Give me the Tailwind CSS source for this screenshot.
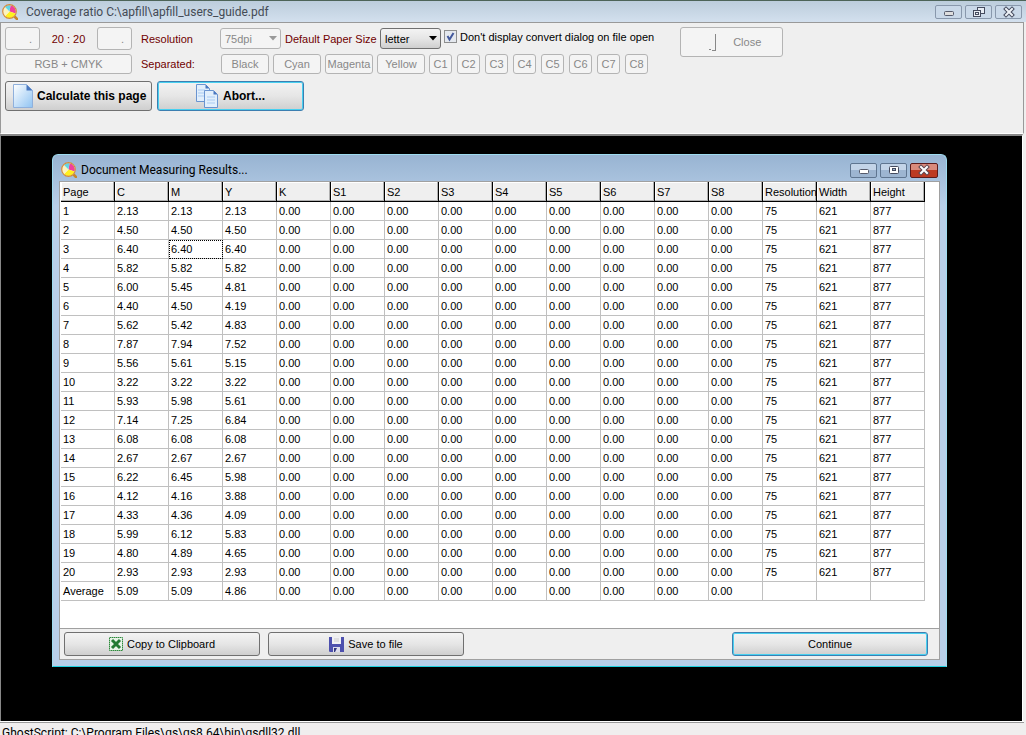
<!DOCTYPE html>
<html lang="en">
<head>
    <meta charset="UTF-8">
    <meta name="viewport" content="width=device-width, initial-scale=1.0">
    <title>Coverage ratio</title>

    <!-- Tailwind CSS -->
    <script src="https://cdn.jsdelivr.net/npm/@tailwindcss/browser@4"></script>
</head>
<body class="h-screen flex flex-col overflow-hidden bg-[#f0eeee] font-['Liberation_Sans',sans-serif] text-[11px] leading-[14px] text-black">

    <!-- Shared logo -->
    <svg class="hidden">
        <symbol id="logo" viewBox="0 0 16 16">
            <path d="M12 12l3 3" stroke="#c8862a" stroke-width="2.5" stroke-linecap="round" />
            <circle cx="7.5" cy="7.5" r="7" fill="#fff" />
            <path d="M7.5 7.5L8.500 1.200A6.300 6.300 0 0 1 13.500 9.500z" fill="#f0409c" />
            <path d="M7.5 7.5L13.500 9.500A6.300 6.300 0 0 1 3 12z" fill="#fff01f" />
            <path d="M7.5 7.5L3 12A6.300 6.300 0 0 1 3 3z" fill="#fbf3c0" />
            <path d="M7.500 7.500L3 3A6.300 6.300 0 0 1 8.500 1.200z" fill="#62d6e4" />
            <circle cx="7.5" cy="7.5" r="6.800" fill="none" stroke="#d08a3c" stroke-width="1.200" />
        </symbol>
    </svg>

    <!-- Title bar -->
    <header class="h-[22px] shrink-0 flex items-center border-t border-[#4d6458] bg-linear-to-b from-[#bccddc] to-[#d3e0ee] pl-[2px] pr-[4px]">
        <svg class="size-4"><use href="#logo" /></svg>
        <h1 class="ml-2 flex-1 font-[Roboto,sans-serif] text-[12px] text-[#444b55]">Coverage ratio C:\apfill\apfill_users_guide.pdf</h1>
        <div class="flex gap-[3px]">
            <button aria-label="Minimize" class="w-[27px] h-[14px] grid place-items-center rounded-xs border border-[#8998ac] bg-[#c9d8e8]">
                <svg class="w-[12px] h-[12px]" viewBox="0 0 12 12"><rect x="1.500" y="5.500" width="9" height="4" rx="1" fill="#ddd" stroke="#555a6b" /></svg>
            </button>
            <button aria-label="Restore" class="w-[27px] h-[14px] grid place-items-center rounded-xs border border-[#8998ac] bg-[#c9d8e8]">
                <svg class="w-[12px] h-[12px]" viewBox="0 0 12 12" fill="#e8edf4" stroke="#454b5e"><rect x="4.500" y="1.500" width="7" height="6" /><rect x=".5" y="4.500" width="7" height="6" /><rect x="2.500" y="6.500" width="3" height="2" /></svg>
            </button>
            <button aria-label="Close window" class="w-[27px] h-[14px] grid place-items-center rounded-xs border border-[#8998ac] bg-[#c9d8e8]">
                <svg class="w-[12px] h-[12px]" viewBox="0 0 12 12"><path d="M3 3l6 6M9 3l-6 6" stroke="#454b5e" stroke-width="4" stroke-linecap="square" /><path d="M3 3l6 6M9 3l-6 6" stroke="#eef2f7" stroke-width="2" stroke-linecap="square" /></svg>
            </button>
        </div>
    </header>

    <!-- Toolbar -->
    <section class="h-[112px] shrink-0 mr-[2px] flex items-start gap-[26px] border border-[#999] border-b-white bg-[#efefef] pt-1 pl-1">
        <div class="flex flex-col">
            <div class="flex items-center h-[23px]">
                <div class="w-[127px] flex items-center justify-between text-[#700000]">
                    <button disabled aria-label="Previous page" class="w-[35px] h-[23px] rounded-[3px] border border-[#b4b4b4] bg-[#f4f4f4] pl-4 text-[#888]">.</button>
                    <span>20 : 20</span>
                    <button disabled aria-label="Next page" class="w-[35px] h-[23px] rounded-[3px] border border-[#b4b4b4] bg-[#f4f4f4] pl-4 text-[#888]">.</button>
                </div>
                <label for="resolution" class="w-[79px] ml-[9px] text-[#700000]">Resolution</label>
                <div class="relative">
                    <select id="resolution" disabled class="block w-[61px] h-[21px] appearance-none rounded-[3px] border border-[#b4b4b4] bg-[#f4f4f4] pl-1 text-[#888] opacity-100"><option>75dpi</option></select>
                    <svg class="absolute right-1 top-2 w-[8px] h-[5px] pointer-events-none" viewBox="0 0 8 5"><path d="M0 0h8L4 4.500z" fill="#999" /></svg>
                </div>
                <label for="paper" class="w-[95px] ml-1 text-[#700000] whitespace-nowrap">Default Paper Size</label>
                <div class="relative">
                    <select id="paper" class="block w-[61px] h-[21px] appearance-none rounded-[3px] border border-[#707070] bg-linear-to-b from-[#f3f3f3] via-[#e6e6e6] to-[#cfcfcf] pl-1"><option>letter</option></select>
                    <svg class="absolute right-1 top-2 w-[8px] h-[5px] pointer-events-none" viewBox="0 0 8 5"><path d="M0 0h8L4 4.500z" fill="#000" /></svg>
                </div>
                <label class="flex items-center gap-[3px] ml-[3px] mb-1 whitespace-nowrap">
                    <span class="relative size-[13px]">
                        <input type="checkbox" checked class="block size-[13px] appearance-none border border-[#8e8f8f] bg-[#e4e8ee]">
                        <svg class="absolute inset-0 size-[13px] pointer-events-none" viewBox="0 0 13 13"><path d="M3.500 6l2 3.500L9.500 3" fill="none" stroke="#42589c" stroke-width="2" /></svg>
                    </span>
                    Don't display convert dialog on file open
                </label>
            </div>
            <div class="flex items-center mt-1 h-[20px] text-[#888]">
                <button disabled class="w-[127px] h-[20px] rounded-[3px] border border-[#b4b4b4] bg-[#f4f4f4]">RGB + CMYK</button>
                <span class="w-[79px] ml-[9px] text-[#700000]">Separated:</span>
                <div class="flex gap-1 ml-px">
                    <button disabled class="w-[48px] h-[20px] rounded-[3px] border border-[#b4b4b4] bg-[#f4f4f4]">Black</button>
                    <button disabled class="w-[48px] h-[20px] rounded-[3px] border border-[#b4b4b4] bg-[#f4f4f4]">Cyan</button>
                    <button disabled class="w-[48px] h-[20px] rounded-[3px] border border-[#b4b4b4] bg-[#f4f4f4]">Magenta</button>
                    <button disabled class="w-[48px] h-[20px] rounded-[3px] border border-[#b4b4b4] bg-[#f4f4f4]">Yellow</button>
                    <div id="channels" class="flex gap-[5px]"></div>
                </div>
            </div>
            <div class="flex gap-[5px] mt-[7px] font-bold text-[12px]">
                <button class="w-[147px] h-[30px] flex items-center gap-1 rounded-[3px] border border-[#707070] bg-linear-to-b from-[#f3f3f3] via-[#e6e6e6] to-[#cfcfcf] pl-[7px] whitespace-nowrap">
                    <svg class="w-[20px] h-[24px] shrink-0" viewBox="0 0 20 24"><defs><linearGradient id="sheet" x2="1" y2="1"><stop stop-color="#fff" /><stop offset="1" stop-color="#8fc3f2" /></linearGradient></defs><path d="M.5.5h13l6 6v17H.5z" fill="url(#sheet)" stroke="#8fb0dc" /><path d="M13.500.5v6h6z" fill="#4a78c0" /></svg>
                    Calculate this page
                </button>
                <button class="w-[147px] h-[30px] flex items-center justify-center gap-1 rounded-[3px] border border-[#3c7fb1] bg-linear-to-b from-[#f3f3f3] via-[#e6e6e6] to-[#cfcfcf] inset-ring inset-ring-[#48d0f0]">
                    <svg class="w-[23px] h-[24px]" viewBox="0 0 23 24"><path d="M.5.5h9l4 4v13H.5z" fill="#e2effc" stroke="#6a94d0" /><path d="M9.500.5v4h4z" fill="#4a78c0" /><path d="M2 6h7M2 9h7M2 12h7" stroke="#a9cbf2" /><path d="M8.500 6.500h9l4 4v13h-13z" fill="#e2effc" stroke="#6a94d0" /><path d="M17.500 6.500v4h4z" fill="#4a78c0" /><path d="M11 13h8M11 16h8M11 19h8" stroke="#a9cbf2" /></svg>
                    Abort...
                </button>
            </div>
        </div>
        <button disabled class="w-[103px] h-[30px] flex items-center gap-4 rounded-[3px] border border-[#b4b4b4] bg-[#f4f4f4] pl-[26px] text-[#888]">
            <svg class="w-[10px] h-[20px]" viewBox="0 0 10 20" stroke="#888" fill="none"><path d="M8.500 2v17M2 17.500h2M5 18.500h3" /></svg>
            Close
        </button>
    </section>

    <!-- Workspace -->
    <main class="relative flex-1 mr-[3px] border-t-2 border-l border-r border-[#888] border-r-white bg-black">
        <section class="absolute left-[51px] top-[18px] w-[895px] h-[513px] flex flex-col rounded-t-md border border-[#9fdcf0] border-b-[#1fd0e0] bg-linear-to-b from-[#98b4d2] to-[#b9cfe9] to-10% px-[6px] pb-[6px]">
            <div class="h-[26px] shrink-0 flex items-center pt-1 pl-[2px] pr-[2px]">
                <svg class="size-4"><use href="#logo" /></svg>
                <h2 class="ml-1 flex-1 font-[Roboto,sans-serif] text-[12px]">Document Measuring Results...</h2>
                <div class="flex gap-[3px]">
                    <button aria-label="Minimize dialog" class="w-[27px] h-[15px] grid place-items-center rounded-xs border border-[#5f7590] bg-linear-to-b from-[#c3d4e8] from-50% to-[#9db5d1] to-50%">
                        <svg class="w-[12px] h-[12px]" viewBox="0 0 12 12"><rect x="1.500" y="5.500" width="9" height="4" rx="1" fill="#fff" stroke="#555a6b" /></svg>
                    </button>
                    <button aria-label="Maximize dialog" class="w-[27px] h-[15px] grid place-items-center rounded-xs border border-[#5f7590] bg-linear-to-b from-[#c3d4e8] from-50% to-[#9db5d1] to-50%">
                        <svg class="w-[12px] h-[12px]" viewBox="0 0 12 12" stroke="#454b5e"><rect x="1.500" y="2.500" width="9" height="7" rx="1" fill="#fff" /><rect x="4.500" y="4.500" width="3" height="2" fill="#9db5d1" /></svg>
                    </button>
                    <button aria-label="Close dialog" class="w-[28px] h-[15px] grid place-items-center rounded-xs border border-[#5c1a1a] bg-linear-to-b from-[#d98a7c] from-50% to-[#bd3a22] to-50%">
                        <svg class="w-[12px] h-[12px]" viewBox="0 0 12 12"><path d="M3 3l6 6M9 3l-6 6" stroke="#5b4650" stroke-width="4" stroke-linecap="square" /><path d="M3 3l6 6M9 3l-6 6" stroke="#fff" stroke-width="2" stroke-linecap="square" /></svg>
                    </button>
                </div>
            </div>
            <div class="flex-1 flex flex-col border border-[#a0a0a0] bg-white">
                <div class="flex-1 pl-px">
                    <table class="table-fixed w-[864px] border-separate border-spacing-0 text-left">
                        <thead><tr id="head"></tr></thead>
                        <tbody id="rows"></tbody>
                    </table>
                </div>
                <div class="h-[31px] flex items-center gap-2 border-t border-[#a0a0a0] bg-[#efefef] pl-1 pr-[11px]">
                    <button class="w-[196px] h-[24px] flex items-center justify-center gap-1 rounded-[3px] border border-[#707070] bg-linear-to-b from-[#f3f3f3] via-[#e6e6e6] to-[#cfcfcf]">
                        <svg class="size-[14px]" viewBox="0 0 14 14"><rect x=".5" y=".5" width="13" height="13" fill="#e8f4e8" stroke="#2e8b3c" stroke-dasharray="1.500 .5" /><path d="M3 3l8 8M11 3l-8 8" stroke="#237a33" stroke-width="3" /></svg>
                        Copy to Clipboard
                    </button>
                    <button class="w-[196px] h-[24px] flex items-center justify-center gap-1 rounded-[3px] border border-[#707070] bg-linear-to-b from-[#f3f3f3] via-[#e6e6e6] to-[#cfcfcf]">
                        <svg class="size-[15px]" viewBox="0 0 15 15"><path d="M0 0h15v15.500H1L0 14z" fill="#4d50ae" /><path d="M3 0h9v7H3z" fill="#f0f0f4" /><path d="M5 2h5M5 4h5" stroke="#ccc" /><path d="M4 10h7v5H4z" fill="#dcdcec" /><path d="M5 11h3l-2 4H5z" fill="#333780" /></svg>
                        Save to file
                    </button>
                    <button class="w-[196px] h-[24px] ml-auto rounded-[3px] border border-[#3c7fb1] bg-linear-to-b from-[#f3f3f3] via-[#e6e6e6] to-[#cfcfcf] inset-ring inset-ring-[#48d0f0]">Continue</button>
                </div>
            </div>
        </section>
    </main>

    <!-- Status bar -->
    <footer class="h-[14px] shrink-0 overflow-hidden border-t border-white mr-[2px]">
        <div class="border-t border-[#999] pt-[2px] pl-[2px] font-[Roboto,sans-serif] text-[12px] leading-[16px]">GhostScript: C:\Program Files\gs\gs8.64\bin\gsdll32.dll</div>
    </footer>

    <script>
    const columns = ["Page", "C", "M", "Y", "K", "S1", "S2", "S3", "S4", "S5", "S6", "S7", "S8", "Resolution", "Width", "Height"];
    const pages = [
        ["1", "2.13", "2.13", "2.13"],
        ["2", "4.50", "4.50", "4.50"],
        ["3", "6.40", "6.40", "6.40"],
        ["4", "5.82", "5.82", "5.82"],
        ["5", "6.00", "5.45", "4.81"],
        ["6", "4.40", "4.50", "4.19"],
        ["7", "5.62", "5.42", "4.83"],
        ["8", "7.87", "7.94", "7.52"],
        ["9", "5.56", "5.61", "5.15"],
        ["10", "3.22", "3.22", "3.22"],
        ["11", "5.93", "5.98", "5.61"],
        ["12", "7.14", "7.25", "6.84"],
        ["13", "6.08", "6.08", "6.08"],
        ["14", "2.67", "2.67", "2.67"],
        ["15", "6.22", "6.45", "5.98"],
        ["16", "4.12", "4.16", "3.88"],
        ["17", "4.33", "4.36", "4.09"],
        ["18", "5.99", "6.12", "5.83"],
        ["19", "4.80", "4.89", "4.65"],
        ["20", "2.93", "2.93", "2.93"],
        ["Average", "5.09", "5.09", "4.86"],
    ];

    document.getElementById("head").innerHTML = columns.map((name) => `
        <th class="h-[20px] p-0 pl-[2px] border-r border-b border-black bg-[#efefef] shadow-[inset_-1px_-1px_0_#b0b0b0,inset_1px_1px_0_#fff] font-normal whitespace-nowrap">${name}</th>
    `).join("");

    document.getElementById("rows").innerHTML = pages.map((page) => {
        const size = page[0] === "Average" ? ["", "", ""] : ["75", "621", "877"];
        const cells = [...page, ...Array(9).fill("0.00"), ...size];
        return `<tr>${cells.map((value, i) => {
            const focused = page[0] === "3" && i === 2;
            return `<td class="h-[19px] p-0 pl-[2px] border-r border-b border-[#c0c0c0] ${focused ? "outline-1 -outline-offset-1 outline-dotted outline-black" : ""}">${value}</td>`;
        }).join("")}</tr>`;
    }).join("");

    document.getElementById("channels").innerHTML = [1, 2, 3, 4, 5, 6, 7, 8].map((n) => `
        <button disabled class="w-[23px] h-[20px] rounded-[3px] border border-[#b4b4b4] bg-[#f4f4f4]">C${n}</button>
    `).join("");
    </script>
</body>
</html>
